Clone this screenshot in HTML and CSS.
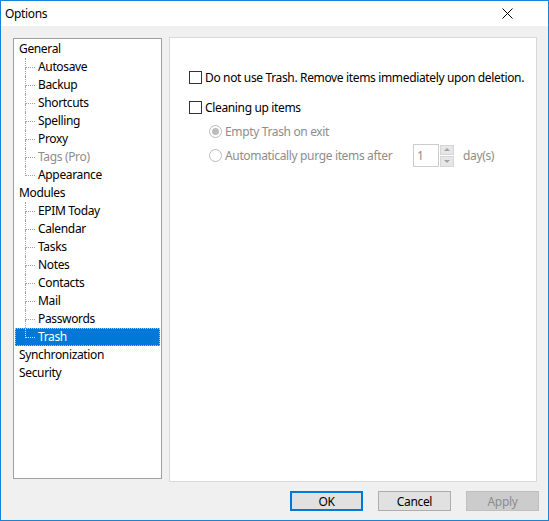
FILE: index.html
```
<!DOCTYPE html>
<html>
<head>
<meta charset="utf-8">
<link rel="stylesheet" href="styles.css">
</head>
<body>
<div class="window">
  <div class="titlebar">
    <span class="title">Options</span>
    <svg class="close" width="11" height="11" viewBox="0 0 11 11"><path d="M0.5 0.5 L10.5 10.5 M10.5 0.5 L0.5 10.5" stroke="#000" stroke-width="1" fill="none"/></svg>
  </div>
  <div class="main">
    <div class="tree">
      <div class="row">General</div>
      <div class="row child"><span class="conn"><i class="top"></i><i class="bot"></i></span>Autosave</div>
      <div class="row child"><span class="conn"><i class="top"></i><i class="bot"></i></span>Backup</div>
      <div class="row child"><span class="conn"><i class="top"></i><i class="bot"></i></span>Shortcuts</div>
      <div class="row child"><span class="conn"><i class="top"></i><i class="bot"></i></span>Spelling</div>
      <div class="row child"><span class="conn"><i class="top"></i><i class="bot"></i></span>Proxy</div>
      <div class="row child disabled"><span class="conn"><i class="top"></i><i class="bot"></i></span>Tags (Pro)</div>
      <div class="row child last"><span class="conn"><i class="top"></i><i class="bot"></i></span>Appearance</div>
      <div class="row">Modules</div>
      <div class="row child"><span class="conn"><i class="top"></i><i class="bot"></i></span>EPIM Today</div>
      <div class="row child"><span class="conn"><i class="top"></i><i class="bot"></i></span>Calendar</div>
      <div class="row child"><span class="conn"><i class="top"></i><i class="bot"></i></span>Tasks</div>
      <div class="row child"><span class="conn"><i class="top"></i><i class="bot"></i></span>Notes</div>
      <div class="row child"><span class="conn"><i class="top"></i><i class="bot"></i></span>Contacts</div>
      <div class="row child"><span class="conn"><i class="top"></i><i class="bot"></i></span>Mail</div>
      <div class="row child"><span class="conn"><i class="top"></i><i class="bot"></i></span>Passwords</div>
      <div class="row child last selected"><span class="conn"><i class="top"></i><i class="bot"></i></span>Trash</div>
      <div class="row">Synchronization</div>
      <div class="row">Security</div>
    </div>
    <div class="panel">
      <div class="opt first"><span class="check"></span><span>Do not use Trash. Remove items immediately upon deletion.</span></div>
      <div class="opt second"><span class="check"></span><span>Cleaning up items</span></div>
      <div class="opt radio-row r1 dis"><span class="radio on"></span><span>Empty Trash on exit</span></div>
      <div class="opt radio-row r2 dis"><span class="radio"></span><span class="purge">Automatically purge items after</span>
        <span class="spin-edit">1</span>
        <span class="spin-btns"><span class="spin-up"><i class="tri-up"></i></span><span class="spin-down"><i class="tri-down"></i></span></span>
        <span class="days">day(s)</span>
      </div>
    </div>
  </div>
  <div class="buttons">
    <div class="btn default">OK</div>
    <div class="btn">Cancel</div>
    <div class="btn disabled-btn">Apply</div>
  </div>
</div>
</body>
</html>
```
FILE: styles.css
```
* { box-sizing: border-box; }
html, body { margin: 0; padding: 0; }
body { font-family: "Segoe UI", "Noto Sans", sans-serif; font-size: 12px; letter-spacing: -0.35px; color: #000; background: #fff; }

.window { width: 549px; height: 521px; border: 1px solid #1883d7; background: #f0f0f0; display: flex; flex-direction: column; }

.titlebar { height: 25px; background: #fff; display: flex; align-items: center; justify-content: space-between; padding: 0 35px 0 4px; }
.title { font-size: 12px; }
.close { display: block; }

.main { display: flex; align-items: flex-start; padding: 11px 0 0 12px; gap: 7px; }

.tree { width: 149px; height: 441px; margin-top: 1px; background: #fff; border: 1px solid #a0a0a0; padding: 1px; }
.row { height: 18px; display: flex; align-items: center; padding-left: 4px; padding-bottom: 1px; white-space: nowrap; }
.row.child { padding-left: 0; }
.row.disabled { color: #8d8d8d; }
.row.selected { background: #0078d7; color: #fff; outline: 1px dotted #e8b85a; outline-offset: -1px; }
.conn { display: flex; flex-direction: column; width: 10px; height: 18px; margin-left: 10px; margin-right: 3px; margin-bottom: -1px; }
.conn i { display: block; }
.conn .top { height: 10px; border-left: 1px dotted #a0a0a0; border-bottom: 1px dotted #a0a0a0; }
.conn .bot { height: 8px; border-left: 1px dotted #a0a0a0; }
.last .conn .bot { border-left: none; }
.selected .conn .top { border-color: #cfe3f5; }

.panel { width: 368px; height: 445px; background: #fff; border: 1px solid #d9d9d9; padding: 31px 0 0 19px; }
.opt { display: flex; align-items: center; height: 16px; white-space: nowrap; }
.opt.second { margin-top: 14px; }
.opt.r1 { margin-top: 8px; margin-left: 20px; }
.opt.r2 { margin-top: 5px; margin-left: 20px; height: 23px; }
.dis { color: #8d8d8d; }

.check { width: 13px; height: 13px; border: 1px solid #333; background: #fff; margin-right: 3px; flex: none; }
.radio { width: 13px; height: 13px; border: 1px solid #bcbcbc; border-radius: 50%; background: #fff; margin-right: 3px; flex: none; display: flex; align-items: center; justify-content: center; }
.radio.on::after { content: ""; width: 7px; height: 7px; border-radius: 50%; background: #bcbcbc; }

.purge { width: 188px; }
.spin-edit { width: 26px; height: 23px; border: 1px solid #cccccc; background: #fff; padding-left: 3px; display: flex; align-items: center; line-height: 1; }
.spin-btns { display: flex; flex-direction: column; margin-left: 1px; width: 14px; height: 22px; gap: 1px; }
.spin-up, .spin-down { flex: 1; background: #e6e6e6; border: 1px solid #d5d5d5; display: flex; align-items: center; justify-content: center; }
.tri-up { width: 0; height: 0; border-left: 3px solid transparent; border-right: 3px solid transparent; border-bottom: 3px solid #a3a3a3; }
.tri-down { width: 0; height: 0; border-left: 3px solid transparent; border-right: 3px solid transparent; border-top: 3px solid #a3a3a3; }
.days { margin-left: 9px; }

.buttons { display: flex; justify-content: flex-end; gap: 15px; padding: 0 9px 0 0; margin-top: 9px; }
.btn { width: 73px; height: 20px; background: #e1e1e1; border: 1px solid #adadad; display: flex; align-items: center; justify-content: center; }
.btn.default { border: 2px solid #0078d7; }
.btn.disabled-btn { background: #cccccc; border-color: #bfbfbf; color: #8d8d8d; }
```
